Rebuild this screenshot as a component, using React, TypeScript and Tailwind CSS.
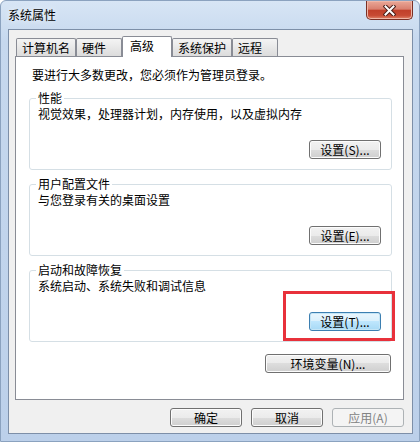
import React from 'react';

type Variant = 'normal' | 'focused' | 'disabled';

const variants: Record<Variant, string> = {
  normal:
    'border-[#707070] text-black bg-[linear-gradient(#f2f2f2,#ebebeb_50%,#dddddd_50%,#cfcfcf)] shadow-[inset_0_0_0_1px_#fcfcfc]',
  focused:
    'border-[#3c7fb1] text-black bg-[linear-gradient(#eaf6fd,#d9f0fc_50%,#bee6fd_50%,#a7d9f5)] shadow-[inset_0_0_0_1px_#c4e5f6]',
  disabled: 'border-[#adb2b5] text-[#838383] bg-[#f4f4f4]',
};

function WinButton({ label, variant = 'normal', width = 'w-[72px]' }: { label: string; variant?: Variant; width?: string }) {
  return (
    <button
      className={`${width} h-[19px] shrink-0 rounded-[3px] border flex items-center justify-center text-[12px] leading-[16px] ${variants[variant]}`}
    >
      {label}
    </button>
  );
}

function GroupBox({ title, text, button, focused }: { title: string; text: string; button: string; focused?: boolean }) {
  return (
    <fieldset className="border border-[#d5dfe5] rounded-[3px] pl-[8px] pr-[10px] pb-[10px]">
      <legend className="px-[2px] -ml-[2px] text-[12px] leading-[16px]">{title}</legend>
      <p className="text-[12px] leading-[16px]">{text}</p>
      <div className="flex justify-end mt-[18px]">
        <WinButton label={button} variant={focused ? 'focused' : 'normal'} />
      </div>
    </fieldset>
  );
}

const tabs = [
  { label: '计算机名', w: 'w-[60px]' },
  { label: '硬件', w: 'w-[46px]' },
  { label: '高级', w: 'w-[50px]', active: true },
  { label: '系统保护', w: 'w-[60px]' },
  { label: '远程', w: 'w-[46px]' },
];

export default function App() {
  return (
    <div className="w-[420px] h-[442px] flex flex-col rounded-t-[6px] border border-[#8ba2bf] bg-[linear-gradient(#d7e5f5,#c6d8ee_40px,#bcd0ea)] font-['Noto_Sans_CJK_SC',sans-serif] text-black overflow-hidden">
      {/* title bar */}
      <div className="h-[28px] flex items-start justify-between shrink-0">
        <span className="pl-[7px] pt-[6px] text-[12px] leading-[16px] [text-shadow:0_0_6px_#ffffff]">系统属性</span>
        <button className="mr-[6px] w-[47px] h-[19px] rounded-b-[5px] border border-t-0 border-[#7a2f24] bg-[linear-gradient(#eaa898,#d9806f_45%,#c1402a_52%,#c74a33_80%,#e0846a)] flex items-center justify-center shadow-[inset_0_0_0_1px_#f0b6a6]">
          <svg width="13" height="11" viewBox="0 0 13 11">
            <path d="M2.5 1.5 L10.5 9.5 M10.5 1.5 L2.5 9.5" stroke="#4a1e18" strokeWidth="4" strokeLinecap="square" />
            <path d="M2.5 1.5 L10.5 9.5 M10.5 1.5 L2.5 9.5" stroke="#ffffff" strokeWidth="2" strokeLinecap="square" />
          </svg>
        </button>
      </div>

      {/* client area */}
      <div className="ml-[7px] mr-[6px] mb-[7px] flex-1 border border-[#7d8fa8] bg-[#f0f0f0] flex flex-col">
        {/* tabs */}
        <div className="flex items-end h-[26px] pt-[6px] pl-[7px] shrink-0">
          {tabs.map((t) =>
            t.active ? (
              <div
                key={t.label}
                className={`${t.w} h-[21px] -mb-px relative z-10 bg-white border border-b-0 border-[#898c95] rounded-t-[2px] pl-[7px] pt-[1px] text-[12px] leading-[16px]`}
              >
                {t.label}
              </div>
            ) : (
              <div
                key={t.label}
                className={`${t.w} h-[18px] border border-b-0 border-[#898c95] rounded-t-[2px] bg-[linear-gradient(#f4f4f4,#e8e8e8_50%,#dcdcdc)] pl-[5px] pt-[1px] text-[12px] leading-[16px]`}
              >
                {t.label}
              </div>
            )
          )}
        </div>

        {/* panel */}
        <div className="ml-[6px] mr-[8px] h-[344px] border border-[#898c95] bg-white pt-[10px] pl-[13px] pr-[11px] flex flex-col">
          <p className="pl-[3px] text-[12px] leading-[16px]">要进行大多数更改，您必须作为管理员登录。</p>
          <div className="mt-[7px] flex flex-col gap-[6px]">
            <GroupBox title="性能" text="视觉效果，处理器计划，内存使用，以及虚拟内存" button="设置(S)..." />
            <GroupBox title="用户配置文件" text="与您登录有关的桌面设置" button="设置(E)..." />
            <div className="relative">
              <GroupBox title="启动和故障恢复" text="系统启动、系统失败和调试信息" button="设置(T)..." focused />
              <div className="absolute left-[254px] top-[29px] w-[112px] h-[50px] border-[3px] border-[#e8313b] pointer-events-none" />
            </div>
          </div>
          <div className="flex justify-end mt-[12px] pr-[1px]">
            <WinButton label="环境变量(N)..." width="w-[126px]" />
          </div>
        </div>

        {/* bottom buttons */}
        <div className="flex justify-end gap-[9px] mt-[8px] mr-[8px]">
          <WinButton label="确定" />
          <WinButton label="取消" />
          <WinButton label="应用(A)" variant="disabled" />
        </div>
      </div>
    </div>
  );
}
